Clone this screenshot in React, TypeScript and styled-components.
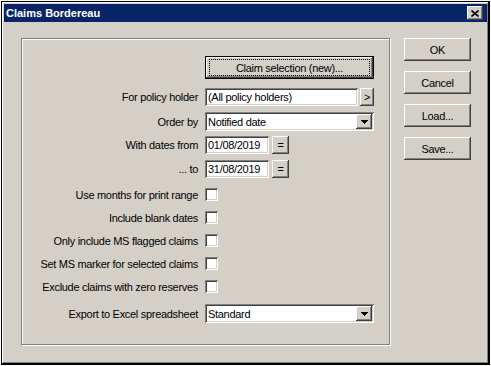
import React from "react";
import styled, { createGlobalStyle } from "styled-components";

const face = "#d4d0c8";

const GlobalStyle = createGlobalStyle`
    body {
        margin: 0;
        background: #ffffff;
        font-family: "Liberation Sans", Arial, sans-serif;
        font-size: 11px;
        color: #000;
    }
`;

const Frame = styled.div`
    margin: 1px 0 0 1px;
    width: 489px;
    height: 364px;
    box-sizing: border-box;
    border-top: 1px solid #000;
    border-left: 1px solid #000;
    border-right: 2px solid #000;
    border-bottom: 2px solid #000;
    background: ${face};
    box-shadow: inset 1px 1px #fff, inset -1px -1px #808080;
    padding: 2px 1px 1px 2px;
    display: flex;
    flex-direction: column;
`;

const TitleBar = styled.div`
    height: 18px;
    flex: none;
    background: #0a246a;
    color: #fff;
    font-weight: bold;
    font-size: 11px;
    display: flex;
    align-items: center;
    padding: 0 4px 0 2px;
`;

const CloseButton = styled.div`
    margin-left: auto;
    width: 16px;
    height: 14px;
    box-sizing: border-box;
    background: ${face};
    box-shadow: inset -1px -1px #404040, inset 1px 1px #fff, inset -2px -2px #808080;
    display: flex;
    align-items: center;
    justify-content: center;
`;

const Body = styled.div`
    display: flex;
    align-items: flex-start;
    padding: 16px 0 0 17px;
`;

const Group = styled.div`
    width: 369px;
    height: 307px;
    box-sizing: border-box;
    border: 1px solid #808080;
    box-shadow: 1px 1px 0 #fff, inset 1px 1px 0 #fff;
    padding-top: 17px;
    display: flex;
    flex-direction: column;
    letter-spacing: -0.3px;
`;

const Row = styled.div<{ $h: number; $mt?: number }>`
    display: grid;
    grid-template-columns: 176px 169px;
    column-gap: 7px;
    align-items: center;
    height: ${(p) => p.$h}px;
    margin-top: ${(p) => p.$mt ?? 0}px;
`;

const Label = styled.div`
    text-align: right;
    white-space: nowrap;
`;

const Cell = styled.div`
    display: flex;
    align-items: center;
    height: 100%;
`;

const raised = `
    background: ${face};
    box-shadow: inset -1px -1px #404040, inset 1px 1px #fff, inset -2px -2px #808080;
`;

const sunken = `
    background: #fff;
    box-shadow: inset 1px 1px #808080, inset -1px -1px #fff, inset 2px 2px #404040, inset -2px -2px ${face};
`;

const Field = styled.div<{ $w: number }>`
    ${sunken}
    width: ${(p) => p.$w}px;
    height: 100%;
    box-sizing: border-box;
    padding: 0 3px;
    display: flex;
    align-items: center;
    white-space: nowrap;
    overflow: hidden;
`;

const SmallButton = styled.div<{ $w: number; $ml: number }>`
    ${raised}
    width: ${(p) => p.$w}px;
    margin-left: ${(p) => p.$ml}px;
    height: 100%;
    box-sizing: border-box;
    display: flex;
    align-items: center;
    justify-content: center;
    font-size: 11px;
`;

const Combo = styled.div`
    ${sunken}
    width: 169px;
    height: 100%;
    box-sizing: border-box;
    padding: 2px 2px 2px 3px;
    display: flex;
    align-items: center;
`;

const ComboText = styled.div`
    flex: 1;
`;

const ComboButton = styled.div`
    ${raised}
    width: 16px;
    height: 100%;
    display: flex;
    align-items: center;
    justify-content: center;
`;

const Check = styled.div`
    ${sunken}
    width: 13px;
    height: 13px;
`;

const DefaultButton = styled.div`
    width: 169px;
    height: 100%;
    box-sizing: border-box;
    border: 1px solid #000;
    ${raised}
    display: flex;
    align-items: center;
    justify-content: center;
    padding: 2px 3px;
`;

const FocusRect = styled.div`
    width: 100%;
    height: 100%;
    box-sizing: border-box;
    border: 1px dotted #000;
    display: flex;
    align-items: center;
    justify-content: center;
`;

const ButtonColumn = styled.div`
    margin-left: 14px;
    display: flex;
    flex-direction: column;
    gap: 10px;
    letter-spacing: -0.3px;
`;

const DialogButton = styled.div`
    ${raised}
    width: 67px;
    height: 23px;
    display: flex;
    align-items: center;
    justify-content: center;
`;

function Arrow() {
    return (
        <svg width="7" height="4" viewBox="0 0 7 4">
            <path d="M0 0h7L3.5 4z" fill="#000" shapeRendering="crispEdges" />
        </svg>
    );
}

const checks = [
    "Use months for print range",
    "Include blank dates",
    "Only include MS flagged claims",
    "Set MS marker for selected claims",
    "Exclude claims with zero reserves",
];

export default function App() {
    return (
        <>
            <GlobalStyle />
            <Frame>
                <TitleBar>
                    Claims Bordereau
                    <CloseButton>
                        <svg width="8" height="7" viewBox="0 0 8 7">
                            <path d="M0.5 0.5l7 6M7.5 0.5l-7 6" stroke="#000" strokeWidth="1.6" />
                        </svg>
                    </CloseButton>
                </TitleBar>
                <Body>
                    <Group>
                        <Row $h={23}>
                            <span />
                            <DefaultButton>
                                <FocusRect>Claim selection (new)...</FocusRect>
                            </DefaultButton>
                        </Row>
                        <Row $h={18} $mt={9}>
                            <Label>For policy holder</Label>
                            <Cell>
                                <Field $w={153}>(All policy holders)</Field>
                                <SmallButton $w={14} $ml={2}>&gt;</SmallButton>
                            </Cell>
                        </Row>
                        <Row $h={19} $mt={6}>
                            <Label>Order by</Label>
                            <Combo>
                                <ComboText>Notified date</ComboText>
                                <ComboButton><Arrow /></ComboButton>
                            </Combo>
                        </Row>
                        <Row $h={18} $mt={5}>
                            <Label>With dates from</Label>
                            <Cell>
                                <Field $w={64}>01/08/2019</Field>
                                <SmallButton $w={17} $ml={3}>=</SmallButton>
                            </Cell>
                        </Row>
                        <Row $h={18} $mt={6}>
                            <Label>... to</Label>
                            <Cell>
                                <Field $w={64}>31/08/2019</Field>
                                <SmallButton $w={17} $ml={3}>=</SmallButton>
                            </Cell>
                        </Row>
                        {checks.map((c) => (
                            <Row key={c} $h={13} $mt={10}>
                                <Label>{c}</Label>
                                <Check />
                            </Row>
                        ))}
                        <Row $h={19} $mt={11}>
                            <Label>Export to Excel spreadsheet</Label>
                            <Combo>
                                <ComboText>Standard</ComboText>
                                <ComboButton><Arrow /></ComboButton>
                            </Combo>
                        </Row>
                    </Group>
                    <ButtonColumn>
                        <DialogButton>OK</DialogButton>
                        <DialogButton>Cancel</DialogButton>
                        <DialogButton>Load...</DialogButton>
                        <DialogButton>Save...</DialogButton>
                    </ButtonColumn>
                </Body>
            </Frame>
        </>
    );
}
